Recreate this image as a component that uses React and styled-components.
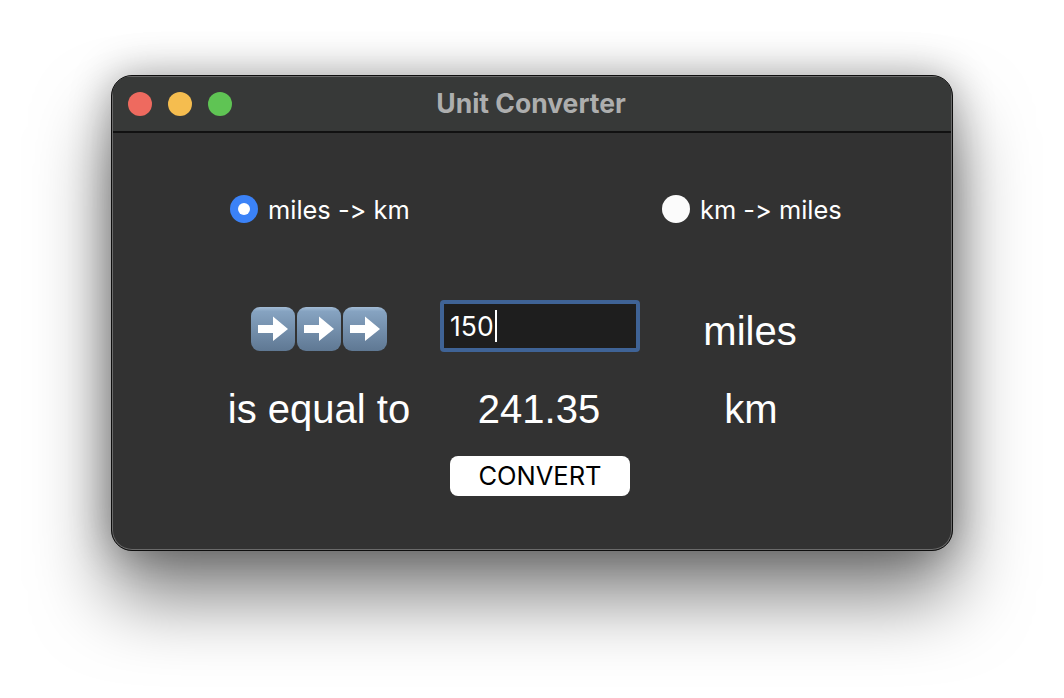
import React from "react";
import styled, { createGlobalStyle } from "styled-components";

const Global = createGlobalStyle`
  html, body { margin: 0; padding: 0; background: #fff; }
  body { width: 1064px; height: 698px; overflow: hidden; }
`;

const Page = styled.div`
  display: flex;
  justify-content: center;
  padding-top: 75px;
  height: 698px;
  box-sizing: border-box;
`;

const Window = styled.div`
  width: 842px;
  height: 476px;
  box-sizing: border-box;
  border-radius: 21px;
  background: #323232;
  border: 1px solid #0e0e0e;
  box-shadow: inset 0 0 0 1px #6a6a6a, 0 46px 76px rgba(0, 0, 0, 0.5), 0 0 42px rgba(0, 0, 0, 0.32);
  overflow: hidden;
  display: flex;
  flex-direction: column;
`;

const TitleBar = styled.header`
  height: 57px;
  flex: none;
  box-sizing: border-box;
  background: #373938;
  border-top: 1px solid #6a6a6a;
  border-bottom: 2px solid #111;
  margin: 0 1px;
  padding: 0 15px;
  display: grid;
  grid-template-columns: 1fr auto 1fr;
  align-items: center;
`;

const Lights = styled.div`
  display: flex;
  gap: 16px;
`;

const Light = styled.span`
  width: 24px;
  height: 24px;
  border-radius: 50%;
  background: ${(p) => p.$color};
`;

const Title = styled.h1`
  margin: 0 2px 2px 0;
  font: 700 26.5px "Inter", "Liberation Sans", sans-serif;
  color: #adaeae;
`;

const Body = styled.main`
  flex: 1;
  padding: 58px 0 0 97px;
`;

const RadioRow = styled.div`
  display: flex;
  padding-left: 21px;
  height: 36px;
  align-items: center;
`;

const RadioOption = styled.label`
  flex: none;
  width: 432px;
  display: flex;
  align-items: center;
  gap: 10px;
  font: 400 25.4px "Inter", "Liberation Sans", sans-serif;
  font-feature-settings: "calt" 0, "liga" 0;
  font-variant-ligatures: none;
  color: #fff;
`;

const RadioMark = styled.span`
  width: 28px;
  height: 28px;
  border-radius: 50%;
  flex: none;
  display: flex;
  align-items: center;
  justify-content: center;
  background: ${(p) => (p.$checked ? "#3b82f7" : "#fbfbfb")};
  &::after {
    content: "";
    display: ${(p) => (p.$checked ? "block" : "none")};
    width: 12px;
    height: 12px;
    border-radius: 50%;
    background: #fff;
  }
`;

const Grid = styled.div`
  margin-top: 65px;
  display: grid;
  grid-template-columns: 220px 200px 198px;
  grid-auto-rows: 78px;
  column-gap: 11px;
  align-items: center;
  justify-items: center;
`;

const BigText = styled.div`
  font: 400 40px "Liberation Sans", Arial, sans-serif;
  color: #fff;
  line-height: 1;
  margin-right: ${(p) => p.$nudge || 0}px;
  margin-left: ${(p) => p.$push || 0}px;
`;

const Arrows = styled.div`
  display: flex;
  gap: 2px;
  margin-bottom: 4px;
`;

const InputBox = styled.div`
  width: 200px;
  height: 52px;
  margin-bottom: 10px;
  box-sizing: border-box;
  border: 4px solid #3f6396;
  border-radius: 4px;
  background: #1e1e1e;
  padding-left: 6px;
  display: flex;
  align-items: center;
  font: 400 26.5px "Inter", "Liberation Sans", sans-serif;
  color: #fff;
`;

const Caret = styled.span`
  width: 2px;
  height: 32px;
  margin-left: 1px;
  background: #fff;
`;

const ButtonRow = styled.div`
  grid-column: 2;
  align-self: start;
  margin-top: 8px;
`;

const Button = styled.button`
  width: 180px;
  height: 40px;
  border: 0;
  border-radius: 8px;
  background: #fff;
  color: #000;
  font: 400 25.5px "Inter", "Liberation Sans", sans-serif;
  padding: 0 0 2px;
`;

const ArrowKey = ({ id }) => (
  <svg width="44" height="44" viewBox="0 0 44 44" aria-hidden="true">
    <defs>
      <linearGradient id={id} x1="0" y1="0" x2="0" y2="1">
        <stop offset="0" stopColor="#a3bcd5" />
        <stop offset="0.1" stopColor="#86a3c1" />
        <stop offset="1" stopColor="#5f7893" />
      </linearGradient>
    </defs>
    <rect x="0" y="0" width="44" height="44" rx="9" fill={`url(#${id})`} />
    <path d="M7 18H22V9.5L37 22L22 34V26H7Z" fill="#fff" />
  </svg>
);

export default function App() {
  return (
    <Page>
      <Global />
      <Window>
        <TitleBar>
          <Lights>
            <Light $color="#ee6a5f" />
            <Light $color="#f5bd4f" />
            <Light $color="#5fc454" />
          </Lights>
          <Title>Unit Converter</Title>
        </TitleBar>
        <Body>
          <RadioRow>
            <RadioOption>
              <RadioMark $checked />
              miles -&gt; km
            </RadioOption>
            <RadioOption>
              <RadioMark />
              km -&gt; miles
            </RadioOption>
          </RadioRow>
          <Grid>
            <Arrows>
              <ArrowKey id="a1" />
              <ArrowKey id="a2" />
              <ArrowKey id="a3" />
            </Arrows>
            <InputBox>
              150
              <Caret />
            </InputBox>
            <BigText>miles</BigText>
            <BigText>is equal to</BigText>
            <BigText $nudge={2}>241.35</BigText>
            <BigText $push={2}>km</BigText>
            <ButtonRow>
              <Button>CONVERT</Button>
            </ButtonRow>
          </Grid>
        </Body>
      </Window>
    </Page>
  );
}
